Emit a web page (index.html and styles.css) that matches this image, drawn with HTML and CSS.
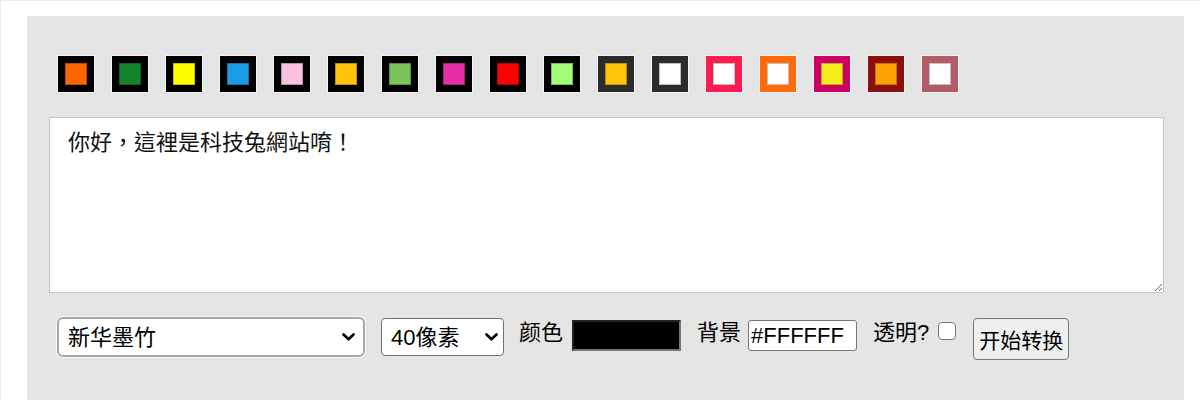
FILE: index.html
```html
<!DOCTYPE html>
<html lang="zh">
<head>
    <meta charset="UTF-8">
    <meta name="viewport" content="width=device-width, initial-scale=1.0">
    <title>文字转图片</title>
    <link rel="stylesheet" href="styles.css">
</head>
<body>
    <div class="panel">
        <div class="swatches">
            <div class="swatch" style="background:#000"><span style="background:#ff6600"></span></div>
            <div class="swatch" style="background:#000"><span style="background:#13842c"></span></div>
            <div class="swatch" style="background:#000"><span style="background:#ffff00"></span></div>
            <div class="swatch" style="background:#000"><span style="background:#1a9be6"></span></div>
            <div class="swatch" style="background:#000"><span style="background:#f9c3e0"></span></div>
            <div class="swatch" style="background:#000"><span style="background:#ffc30b"></span></div>
            <div class="swatch" style="background:#000"><span style="background:#79c55b"></span></div>
            <div class="swatch" style="background:#000"><span style="background:#e42ea6"></span></div>
            <div class="swatch" style="background:#000"><span style="background:#ff0000"></span></div>
            <div class="swatch" style="background:#000"><span style="background:#a3ff76"></span></div>
            <div class="swatch" style="background:#2b2b2b"><span style="background:#ffc30b"></span></div>
            <div class="swatch" style="background:#2b2b2b"><span style="background:#ffffff"></span></div>
            <div class="swatch" style="background:#ff1a50"><span style="background:#ffffff"></span></div>
            <div class="swatch" style="background:#ff6b0a"><span style="background:#ffffff"></span></div>
            <div class="swatch" style="background:#cc0066"><span style="background:#f5ec1e"></span></div>
            <div class="swatch" style="background:#8e0e0b"><span style="background:#fba305"></span></div>
            <div class="swatch" style="background:#b35b66"><span style="background:#ffffff"></span></div>
        </div>

        <textarea class="text" id="text" lang="zh-Hant">你好，這裡是科技兔網站唷！</textarea>

        <div class="controls">
            <div class="select-wrap font-select">
                <select id="font">
                    <option>新华墨竹</option>
                </select>
                <svg class="chev" viewBox="0 0 13 8" width="13" height="8"><path d="M1.5 1.5 L6.5 6.3 L11.5 1.5" fill="none" stroke="#000" stroke-width="2.6" stroke-linecap="round" stroke-linejoin="round"/></svg>
            </div>
            <div class="select-wrap size-select">
                <select id="size">
                    <option>40像素</option>
                </select>
                <svg class="chev" viewBox="0 0 13 8" width="13" height="8"><path d="M1.5 1.5 L6.5 6.3 L11.5 1.5" fill="none" stroke="#000" stroke-width="2.6" stroke-linecap="round" stroke-linejoin="round"/></svg>
            </div>
            <label class="label color-label">颜色</label>
            <input type="color" class="color" id="color" value="#000000">
            <label class="label bg-label">背景</label>
            <input type="text" class="bg" id="bg" value="#FFFFFF">
            <label class="label alpha-label">透明?</label>
            <input type="checkbox" class="alpha" id="alpha">
            <button class="go" id="go">开始转换</button>
        </div>
    </div>
</body>
</html>
```

FILE: styles.css
```css
body {
    margin: 0;
    border-top: 1px solid #ececec;
    border-left: 1px solid #ececec;
    background: #fff;
    color: #000;
    font-family: "Liberation Sans", "Noto Sans CJK SC", sans-serif;
    font-size: 22px;
}
.panel {
    box-sizing: border-box;
    margin: 15px 16px 0 26px;
    height: 384px;
    padding: 39px 20px 0 22px;
    background: #e5e5e5;
}
.swatches {
    display: flex;
    gap: 16px;
    margin-left: 8px;
    margin-bottom: 24px;
}
.swatch {
    box-sizing: border-box;
    width: 38px;
    height: 38px;
    padding: 7px;
    border: 1px solid #f4f4f4;
}
.swatch span {
    display: block;
    width: 22px;
    height: 22px;
    box-shadow: inset 0 0 0 1px rgba(0, 0, 0, 0.25);
}
.text {
    display: block;
    box-sizing: border-box;
    width: 100%;
    height: 176px;
    margin: 0 0 24px;
    padding: 11px 18px;
    border: 1px solid #c6c6c6;
    font-family: "Liberation Sans", "Noto Sans CJK TC", sans-serif;
    font-size: 22px;
    line-height: 28px;
    color: #111;
    outline: none;
}
.controls {
    display: flex;
    align-items: flex-start;
    margin-left: 8px;
}
.select-wrap {
    position: relative;
}
.select-wrap select {
    -webkit-appearance: none;
    appearance: none;
    box-sizing: border-box;
    background: #fff;
    color: #000;
    font-family: "Liberation Sans", "Noto Sans CJK SC", sans-serif;
    font-size: 22px;
    margin: 0;
    outline: none;
}
.chev {
    position: absolute;
    top: 16px;
    pointer-events: none;
}
.font-select select {
    width: 308px;
    height: 40px;
    padding: 0 0 0 9px;
    border: 2px solid #a8a8a8;
    border-radius: 6px;
    box-shadow: 0 0 0 1px #f7f7f7;
}
.font-select .chev {
    right: 10px;
}
.size-select {
    margin-left: 16px;
    margin-top: 1px;
}
.size-select select {
    width: 123px;
    height: 38px;
    padding: 0 0 0 9px;
    border: 1px solid #6f6f6f;
    border-radius: 4px;
}
.size-select .chev {
    top: 15px;
    right: 6px;
}
.label {
    margin-top: 2px;
    line-height: 28px;
}
.color-label {
    margin-left: 15px;
}
.bg-label,
.alpha-label {
    margin-left: 16px;
}
.color {
    -webkit-appearance: none;
    appearance: none;
    box-sizing: border-box;
    width: 109px;
    height: 31px;
    margin: 3px 0 0 9px;
    padding: 0;
    border: 2px solid;
    border-color: #222 #767676 #767676 #222;
    background: #000;
}
.color::-webkit-color-swatch-wrapper {
    padding: 0;
}
.color::-webkit-color-swatch {
    border: none;
}
.bg {
    box-sizing: border-box;
    width: 109px;
    height: 31px;
    margin: 3px 0 0 7px;
    padding: 0 2px;
    border: 1px solid #767676;
    border-radius: 3px;
    font-family: "Liberation Sans", sans-serif;
    font-size: 22px;
    color: #000;
    outline: none;
}
.alpha {
    -webkit-appearance: none;
    appearance: none;
    width: 18px;
    height: 18px;
    margin: 5px 0 0 9px;
    border: 1px solid #767676;
    border-radius: 4px;
    background: #fff;
}
.go {
    box-sizing: border-box;
    width: 96px;
    height: 42px;
    margin: 1px 0 0 17px;
    padding: 0;
    border: 1px solid #767676;
    border-radius: 4px;
    background: #efefef;
    color: #000;
    font-family: "Liberation Sans", "Noto Sans CJK SC", sans-serif;
    font-size: 21px;
}
```
